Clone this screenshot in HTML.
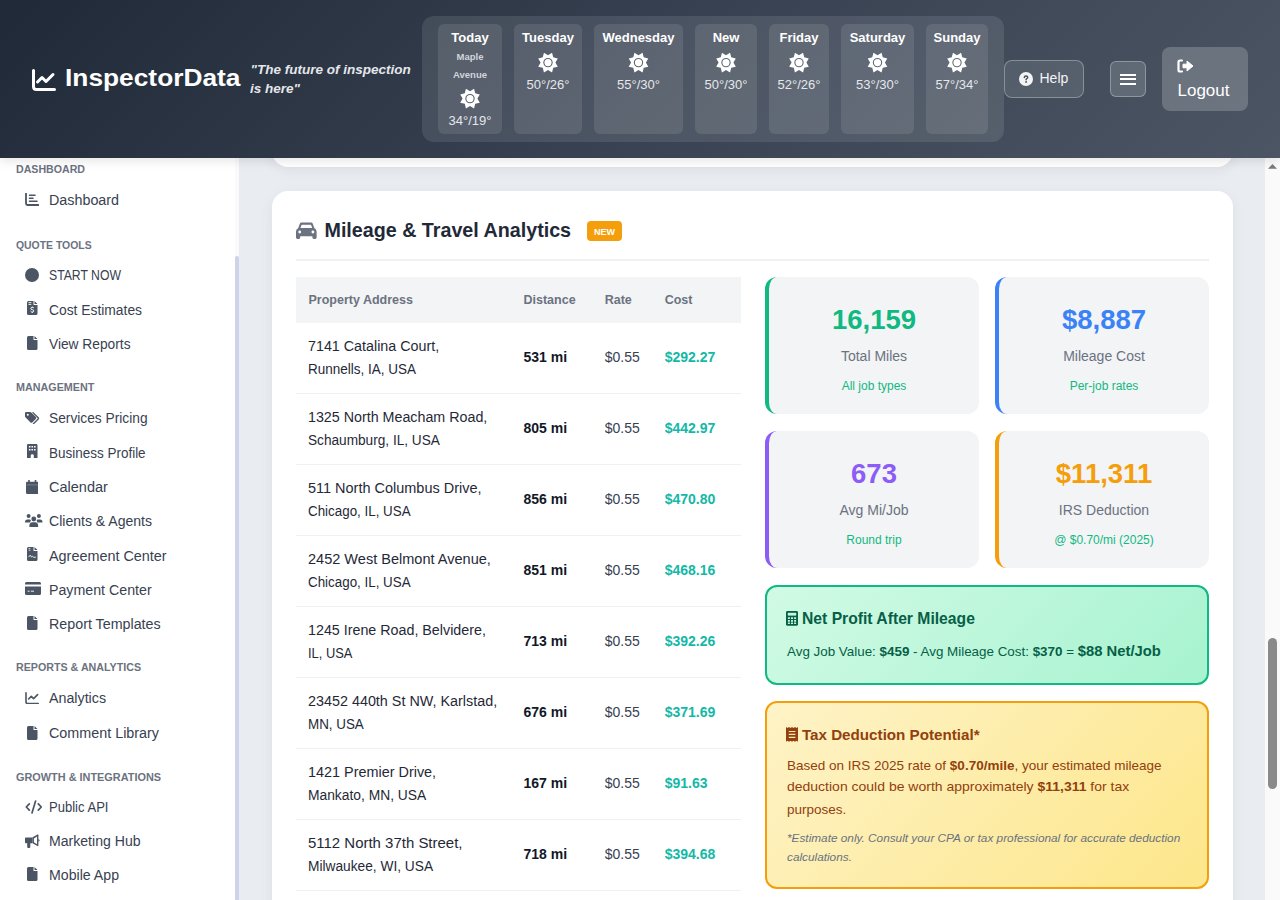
<!DOCTYPE html>
<html><head><meta charset="utf-8">
<style>
*{box-sizing:border-box;margin:0;padding:0}
html,body{width:1280px;height:900px;overflow:hidden;font-family:"Liberation Sans",sans-serif;background:#fff;position:relative}
.a{position:absolute}
.t{position:absolute;line-height:1;white-space:nowrap}
#hdr{left:0;top:0;width:1280px;height:158px;background:linear-gradient(135deg,#1f2937 0%,#374151 50%,#4b5563 100%);box-shadow:0 3px 10px rgba(0,0,0,0.1)}
#side{left:0;top:158px;width:239px;height:742px;background:#fff}
#main{left:239px;top:158px;width:1041px;height:742px;background:#e9ecf0}
</style></head><body>
<div class="a" style="left:0;top:0;z-index:10"><div class="a" id="hdr"></div>
<svg class="a" style="left:31px;top:68.6px" width="26" height="23" viewBox="0 0 26 23"><path d="M2.5 1.5V17.5Q2.5 20.5 5.5 20.5H23.5" fill="none" stroke="#fff" stroke-width="3" stroke-linecap="round" stroke-linejoin="round"/><path d="M6.5 13L11 8.5L15 12.5L22 5.5" fill="none" stroke="#fff" stroke-width="3" stroke-linecap="round" stroke-linejoin="round"/></svg>
<div class="t" style="left:65.00px;top:67.02px;font-size:23.6px;color:#fff;transform:scaleX(1.1154);transform-origin:0 0;font-weight:700;">InspectorData</div>
<div class="t" style="left:250.50px;top:63.27px;font-size:13.5px;color:#e5e7eb;font-weight:700;font-style:italic;">&quot;The future of inspection</div>
<div class="t" style="left:250.00px;top:82.27px;font-size:13.5px;color:#e5e7eb;font-weight:700;font-style:italic;">is here&quot;</div>
<div class="a" style="left:422px;top:16px;width:582px;height:126px;background:rgba(255,255,255,0.1);border-radius:12px"></div>
<div class="a" style="left:438px;top:24px;width:64px;height:110px;background:rgba(255,255,255,0.1);border-radius:6px"></div>
<div class="t" style="left:428.00px;top:30.60px;width:84px;text-align:center;font-size:13px;color:#fff;font-weight:700;">Today</div>
<div class="t" style="left:438.00px;top:52.36px;width:64px;text-align:center;font-size:9.5px;color:#d1d5db;font-weight:700;">Maple</div>
<div class="t" style="left:438.00px;top:69.96px;width:64px;text-align:center;font-size:9.5px;color:#d1d5db;font-weight:700;">Avenue</div>
<div class="t" style="left:428.00px;top:113.80px;width:84px;text-align:center;font-size:13px;color:#e5e7eb;">34°/19°</div>
<div class="a" style="left:514px;top:24px;width:68px;height:110px;background:rgba(255,255,255,0.1);border-radius:6px"></div>
<div class="t" style="left:504.00px;top:30.60px;width:88px;text-align:center;font-size:13px;color:#fff;font-weight:700;">Tuesday</div>
<div class="t" style="left:504.00px;top:78.20px;width:88px;text-align:center;font-size:13px;color:#e5e7eb;">50°/26°</div>
<div class="a" style="left:594px;top:24px;width:89px;height:110px;background:rgba(255,255,255,0.1);border-radius:6px"></div>
<div class="t" style="left:584.00px;top:30.60px;width:109px;text-align:center;font-size:13px;color:#fff;font-weight:700;">Wednesday</div>
<div class="t" style="left:584.00px;top:78.20px;width:109px;text-align:center;font-size:13px;color:#e5e7eb;">55°/30°</div>
<div class="a" style="left:695px;top:24px;width:62px;height:110px;background:rgba(255,255,255,0.1);border-radius:6px"></div>
<div class="t" style="left:685.00px;top:30.60px;width:82px;text-align:center;font-size:13px;color:#fff;font-weight:700;">New</div>
<div class="t" style="left:685.00px;top:78.20px;width:82px;text-align:center;font-size:13px;color:#e5e7eb;">50°/30°</div>
<div class="a" style="left:769px;top:24px;width:60px;height:110px;background:rgba(255,255,255,0.1);border-radius:6px"></div>
<div class="t" style="left:759.00px;top:30.60px;width:80px;text-align:center;font-size:13px;color:#fff;font-weight:700;">Friday</div>
<div class="t" style="left:759.00px;top:78.20px;width:80px;text-align:center;font-size:13px;color:#e5e7eb;">52°/26°</div>
<div class="a" style="left:841px;top:24px;width:73px;height:110px;background:rgba(255,255,255,0.1);border-radius:6px"></div>
<div class="t" style="left:831.00px;top:30.60px;width:93px;text-align:center;font-size:13px;color:#fff;font-weight:700;">Saturday</div>
<div class="t" style="left:831.00px;top:78.20px;width:93px;text-align:center;font-size:13px;color:#e5e7eb;">53°/30°</div>
<div class="a" style="left:926px;top:24px;width:62px;height:110px;background:rgba(255,255,255,0.1);border-radius:6px"></div>
<div class="t" style="left:916.00px;top:30.60px;width:82px;text-align:center;font-size:13px;color:#fff;font-weight:700;">Sunday</div>
<div class="t" style="left:916.00px;top:78.20px;width:82px;text-align:center;font-size:13px;color:#e5e7eb;">57°/34°</div>
<svg class="a" style="left:0;top:0" width="1280" height="158" viewBox="0 0 1280 158"><path fill="#fff" fill-rule="evenodd" d="M474.06 88.81 L475.23 93.37 L479.79 94.54 L477.40 98.60 L479.79 102.66 L475.23 103.83 L474.06 108.39 L470.00 106.00 L465.94 108.39 L464.77 103.83 L460.21 102.66 L462.60 98.60 L460.21 94.54 L464.77 93.37 L465.94 88.81 L470.00 91.20ZM465.30 98.60a4.7 4.7 0 1 0 9.4 0a4.7 4.7 0 1 0 -9.4 0ZM466.40 98.60a3.6 3.6 0 1 0 7.2 0a3.6 3.6 0 1 0 -7.2 0ZM552.06 52.81 L553.23 57.37 L557.79 58.54 L555.40 62.60 L557.79 66.66 L553.23 67.83 L552.06 72.39 L548.00 70.00 L543.94 72.39 L542.77 67.83 L538.21 66.66 L540.60 62.60 L538.21 58.54 L542.77 57.37 L543.94 52.81 L548.00 55.20ZM543.30 62.60a4.7 4.7 0 1 0 9.4 0a4.7 4.7 0 1 0 -9.4 0ZM544.40 62.60a3.6 3.6 0 1 0 7.2 0a3.6 3.6 0 1 0 -7.2 0ZM642.56 52.81 L643.73 57.37 L648.29 58.54 L645.90 62.60 L648.29 66.66 L643.73 67.83 L642.56 72.39 L638.50 70.00 L634.44 72.39 L633.27 67.83 L628.71 66.66 L631.10 62.60 L628.71 58.54 L633.27 57.37 L634.44 52.81 L638.50 55.20ZM633.80 62.60a4.7 4.7 0 1 0 9.4 0a4.7 4.7 0 1 0 -9.4 0ZM634.90 62.60a3.6 3.6 0 1 0 7.2 0a3.6 3.6 0 1 0 -7.2 0ZM730.06 52.81 L731.23 57.37 L735.79 58.54 L733.40 62.60 L735.79 66.66 L731.23 67.83 L730.06 72.39 L726.00 70.00 L721.94 72.39 L720.77 67.83 L716.21 66.66 L718.60 62.60 L716.21 58.54 L720.77 57.37 L721.94 52.81 L726.00 55.20ZM721.30 62.60a4.7 4.7 0 1 0 9.4 0a4.7 4.7 0 1 0 -9.4 0ZM722.40 62.60a3.6 3.6 0 1 0 7.2 0a3.6 3.6 0 1 0 -7.2 0ZM803.06 52.81 L804.23 57.37 L808.79 58.54 L806.40 62.60 L808.79 66.66 L804.23 67.83 L803.06 72.39 L799.00 70.00 L794.94 72.39 L793.77 67.83 L789.21 66.66 L791.60 62.60 L789.21 58.54 L793.77 57.37 L794.94 52.81 L799.00 55.20ZM794.30 62.60a4.7 4.7 0 1 0 9.4 0a4.7 4.7 0 1 0 -9.4 0ZM795.40 62.60a3.6 3.6 0 1 0 7.2 0a3.6 3.6 0 1 0 -7.2 0ZM881.56 52.81 L882.73 57.37 L887.29 58.54 L884.90 62.60 L887.29 66.66 L882.73 67.83 L881.56 72.39 L877.50 70.00 L873.44 72.39 L872.27 67.83 L867.71 66.66 L870.10 62.60 L867.71 58.54 L872.27 57.37 L873.44 52.81 L877.50 55.20ZM872.80 62.60a4.7 4.7 0 1 0 9.4 0a4.7 4.7 0 1 0 -9.4 0ZM873.90 62.60a3.6 3.6 0 1 0 7.2 0a3.6 3.6 0 1 0 -7.2 0ZM961.06 52.81 L962.23 57.37 L966.79 58.54 L964.40 62.60 L966.79 66.66 L962.23 67.83 L961.06 72.39 L957.00 70.00 L952.94 72.39 L951.77 67.83 L947.21 66.66 L949.60 62.60 L947.21 58.54 L951.77 57.37 L952.94 52.81 L957.00 55.20ZM952.30 62.60a4.7 4.7 0 1 0 9.4 0a4.7 4.7 0 1 0 -9.4 0ZM953.40 62.60a3.6 3.6 0 1 0 7.2 0a3.6 3.6 0 1 0 -7.2 0Z"/></svg>
<div class="a" style="left:1004px;top:60px;width:80px;height:38px;border:1px solid rgba(255,255,255,0.3);background:rgba(255,255,255,0.1);border-radius:8px"></div>
<svg class="a" style="left:1019px;top:72px" width="14" height="14" viewBox="0 0 14 14"><circle cx="7" cy="7" r="7" fill="#f3f4f6"/><path d="M5.3 5.6Q5.3 3.9 7 3.9Q8.7 3.9 8.7 5.3Q8.7 6.2 7.7 6.7Q7.1 7 7.1 7.8" fill="none" stroke="#4b5260" stroke-width="1.5" stroke-linecap="round"/><circle cx="7.1" cy="9.9" r="0.95" fill="#4b5260"/></svg>
<div class="t" style="left:1039.50px;top:71.25px;font-size:14px;color:#f3f4f6;">Help</div>
<div class="a" style="left:1110px;top:61px;width:36px;height:36px;border:1px solid rgba(255,255,255,0.3);background:rgba(255,255,255,0.15);border-radius:6px"></div>
<div class="a" style="left:1120px;top:74px;width:16px;height:2px;background:#fff"></div>
<div class="a" style="left:1120px;top:78.25px;width:16px;height:2px;background:#fff"></div>
<div class="a" style="left:1120px;top:82.5px;width:16px;height:2px;background:#fff"></div>
<div class="a" style="left:1162px;top:47px;width:86px;height:64px;background:rgba(255,255,255,0.2);border-radius:8px"></div>
<svg class="a" style="left:1177px;top:59px" width="17" height="14" viewBox="0 0 17 14"><path d="M5 1.5H3Q1.5 1.5 1.5 3V11Q1.5 12.5 3 12.5H5" fill="none" stroke="#fff" stroke-width="2.2" stroke-linecap="round"/><path d="M6 5.2H10V2L16 7L10 12V8.8H6Z" fill="#fff" stroke="#fff" stroke-width="1" stroke-linejoin="round"/></svg>
<div class="t" style="left:1177.50px;top:81.61px;font-size:17px;color:#fff;">Logout</div>
</div>
<div class="a" id="side"></div>
<div class="t" style="left:16.00px;top:164.11px;font-size:10.5px;color:#6b7280;transform:scaleX(1.0115);transform-origin:0 0;font-weight:700;">DASHBOARD</div>
<div class="t" style="left:16.00px;top:240.11px;font-size:10.5px;color:#6b7280;transform:scaleX(0.9919);transform-origin:0 0;font-weight:700;">QUOTE TOOLS</div>
<div class="t" style="left:16.00px;top:382.41px;font-size:10.5px;color:#6b7280;transform:scaleX(1.0250);transform-origin:0 0;font-weight:700;">MANAGEMENT</div>
<div class="t" style="left:16.00px;top:662.31px;font-size:10.5px;color:#6b7280;transform:scaleX(1.0176);transform-origin:0 0;font-weight:700;">REPORTS &amp; ANALYTICS</div>
<div class="t" style="left:16.00px;top:771.61px;font-size:10.5px;color:#6b7280;transform:scaleX(1.0375);transform-origin:0 0;font-weight:700;">GROWTH &amp; INTEGRATIONS</div>
<div class="t" style="left:49.00px;top:193.15px;font-size:14px;color:#374151;transform:scaleX(1.0226);transform-origin:0 0;">Dashboard</div>
<svg class="a" style="left:25px;top:192.5px" width="14" height="13" viewBox="0 0 14 13"><path d="M1 0.5V10.5Q1 12 2.5 12H13.5" fill="none" stroke="#4b5563" stroke-width="1.8" stroke-linecap="round"/><path d="M4.5 2.2H10M4.5 5.2H8M4.5 8.2H12" stroke="#4b5563" stroke-width="1.6" stroke-linecap="round"/></svg>
<div class="t" style="left:49.00px;top:268.15px;font-size:14px;color:#374151;transform:scaleX(0.8731);transform-origin:0 0;">START NOW</div>
<svg class="a" style="left:25px;top:267.5px" width="14" height="14" viewBox="0 0 14 14"><circle cx="7" cy="7" r="7" fill="#4b5563"/></svg>
<div class="t" style="left:49.00px;top:302.95px;font-size:14px;color:#374151;transform:scaleX(0.9880);transform-origin:0 0;">Cost Estimates</div>
<svg class="a" style="left:27px;top:301.3px" width="10.5" height="14" viewBox="0 0 10.5 14"><path d="M1.5 0H6.5V3.5Q6.5 4 7 4H10.5V12.5Q10.5 14 9 14H1.5Q0 14 0 12.5V1.5Q0 0 1.5 0ZM7.5 0L10.5 3H7.5Z" fill="#4b5563"/><path d="M1.5 1.6H4.3M1.5 3.4H4.3" stroke="#fff" stroke-width="0.9"/><path d="M7 7.2Q6.6 6.4 5.3 6.4Q3.8 6.4 3.8 7.6Q3.8 8.5 5.3 8.7Q6.8 8.9 6.8 9.9Q6.8 11 5.3 11Q4 11 3.6 10.2M5.3 5.6V6.4M5.3 11V11.9" fill="none" stroke="#fff" stroke-width="1"/></svg>
<div class="t" style="left:49.00px;top:337.25px;font-size:14px;color:#374151;transform:scaleX(0.9821);transform-origin:0 0;">View Reports</div>
<svg class="a" style="left:27px;top:335.6px" width="10.5" height="14" viewBox="0 0 10.5 14"><path d="M1.5 0H6.5V3.5Q6.5 4 7 4H10.5V12.5Q10.5 14 9 14H1.5Q0 14 0 12.5V1.5Q0 0 1.5 0ZM7.5 0L10.5 3H7.5Z" fill="#4b5563"/></svg>
<div class="t" style="left:49.00px;top:411.45px;font-size:14px;color:#374151;transform:scaleX(0.9816);transform-origin:0 0;">Services Pricing</div>
<svg class="a" style="left:25px;top:411.5px" width="14.5" height="12.5" viewBox="0 0 14.5 12.5"><path d="M0 1.2Q0 0 1.2 0H5.3Q5.9 0 6.3 0.4L10.9 5Q11.8 5.9 10.9 6.8L7.3 10.4Q6.4 11.3 5.5 10.4L0.4 5.3Q0 4.9 0 4.3Z" fill="#4b5563"/><circle cx="2.8" cy="2.8" r="1" fill="#fff"/><path d="M8 0.6L13.2 5.8Q13.8 6.4 13.2 7L8.5 11.7" fill="none" stroke="#4b5563" stroke-width="1.3" stroke-linecap="round"/></svg>
<div class="t" style="left:49.00px;top:445.75px;font-size:14px;color:#374151;transform:scaleX(0.9625);transform-origin:0 0;">Business Profile</div>
<svg class="a" style="left:27px;top:444.1px" width="10.5" height="14" viewBox="0 0 10.5 14"><path d="M1.2 0H9.3Q10.5 0 10.5 1.2V14H6.8V11.5Q6.8 10.2 5.25 10.2Q3.7 10.2 3.7 11.5V14H0V1.2Q0 0 1.2 0Z" fill="#4b5563"/><path d="M1.9 2.1h1.6v1.4h-1.6zM4.45 2.1h1.6v1.4h-1.6zM7 2.1h1.6v1.4h-1.6zM1.9 5.1h1.6v1.4h-1.6zM4.45 5.1h1.6v1.4h-1.6zM7 5.1h1.6v1.4h-1.6z" fill="#fff"/></svg>
<div class="t" style="left:49.00px;top:480.05px;font-size:14px;color:#374151;transform:scaleX(1.0356);transform-origin:0 0;">Calendar</div>
<svg class="a" style="left:25.8px;top:479.7px" width="12.5" height="14" viewBox="0 0 12.5 14"><path d="M3 0.3V2.5M9.5 0.3V2.5" stroke="#4b5563" stroke-width="1.6" stroke-linecap="round"/><path d="M1.3 1.8H11.2Q12.5 1.8 12.5 3.1V12.7Q12.5 14 11.2 14H1.3Q0 14 0 12.7V3.1Q0 1.8 1.3 1.8Z" fill="#4b5563"/><path d="M0.3 4.9H12.2" stroke="#fff" stroke-width="0.5" opacity="0.5"/></svg>
<div class="t" style="left:49.00px;top:514.35px;font-size:14px;color:#374151;transform:scaleX(1.0027);transform-origin:0 0;">Clients &amp; Agents</div>
<svg class="a" style="left:25px;top:513.2px" width="17.5" height="14" viewBox="0 0 17.5 14"><circle cx="3.6" cy="3" r="2" fill="#4b5563"/><circle cx="13.9" cy="3" r="2" fill="#4b5563"/><circle cx="8.75" cy="6" r="2.4" fill="#4b5563"/><path d="M0 9Q0 6.4 2.4 6.4H4.8Q5.6 6.4 6 6.9Q5.2 8 5.3 9.6H0.6Q0 9.6 0 9Z" fill="#4b5563"/><path d="M17.5 9Q17.5 6.4 15.1 6.4H12.7Q11.9 6.4 11.5 6.9Q12.3 8 12.2 9.6H16.9Q17.5 9.6 17.5 9Z" fill="#4b5563"/><path d="M4.3 13.4Q4.3 9.3 7.5 9.3H10Q13.2 9.3 13.2 13.4Q13.2 14 12.6 14H4.9Q4.3 14 4.3 13.4Z" fill="#4b5563"/></svg>
<div class="t" style="left:49.00px;top:548.65px;font-size:14px;color:#374151;transform:scaleX(1.0285);transform-origin:0 0;">Agreement Center</div>
<svg class="a" style="left:27px;top:547.0px" width="10.5" height="14" viewBox="0 0 10.5 14"><path d="M1.5 0H6.5V3.5Q6.5 4 7 4H10.5V12.5Q10.5 14 9 14H1.5Q0 14 0 12.5V1.5Q0 0 1.5 0ZM7.5 0L10.5 3H7.5Z" fill="#4b5563"/><path d="M1.6 1.6H3.4M1.6 3.2H3.4" stroke="#fff" stroke-width="0.8"/><path d="M1.5 10.2L3.2 8.2L4.5 10L5.3 9.3L6.2 10.2H8.8" fill="none" stroke="#fff" stroke-width="0.9"/></svg>
<div class="t" style="left:49.00px;top:582.95px;font-size:14px;color:#374151;transform:scaleX(1.0146);transform-origin:0 0;">Payment Center</div>
<svg class="a" style="left:25px;top:582.0px" width="16" height="13" viewBox="0 0 16 13"><path d="M1.5 0H14.5Q16 0 16 1.5V2.6H0V1.5Q0 0 1.5 0ZM0 4.4H16V11.5Q16 13 14.5 13H1.5Q0 13 0 11.5Z" fill="#4b5563"/><path d="M2.6 9.2H4.6M5.8 9.2H9" stroke="#fff" stroke-width="0.9"/></svg>
<div class="t" style="left:49.00px;top:617.25px;font-size:14px;color:#374151;transform:scaleX(1.0199);transform-origin:0 0;">Report Templates</div>
<svg class="a" style="left:27px;top:615.6px" width="10.5" height="14" viewBox="0 0 10.5 14"><path d="M1.5 0H6.5V3.5Q6.5 4 7 4H10.5V12.5Q10.5 14 9 14H1.5Q0 14 0 12.5V1.5Q0 0 1.5 0ZM7.5 0L10.5 3H7.5Z" fill="#4b5563"/></svg>
<div class="t" style="left:49.00px;top:691.35px;font-size:14px;color:#374151;transform:scaleX(1.0176);transform-origin:0 0;">Analytics</div>
<svg class="a" style="left:25px;top:691.7px" width="14" height="12.5" viewBox="0 0 14 12.5"><path d="M1 0.8V10Q1 11.5 2.5 11.5H13.2" fill="none" stroke="#4b5563" stroke-width="1.6" stroke-linecap="round"/><path d="M3.6 7L6.3 4.4L8.6 6.6L12.6 2.6" fill="none" stroke="#4b5563" stroke-width="1.6" stroke-linecap="round" stroke-linejoin="round"/></svg>
<div class="t" style="left:49.00px;top:725.65px;font-size:14px;color:#374151;transform:scaleX(1.0250);transform-origin:0 0;">Comment Library</div>
<svg class="a" style="left:27px;top:725.5px" width="10.5" height="14" viewBox="0 0 10.5 14"><path d="M1.5 0H6.5V3.5Q6.5 4 7 4H10.5V12.5Q10.5 14 9 14H1.5Q0 14 0 12.5V1.5Q0 0 1.5 0ZM7.5 0L10.5 3H7.5Z" fill="#4b5563"/></svg>
<div class="t" style="left:49.00px;top:799.65px;font-size:14px;color:#374151;transform:scaleX(0.9322);transform-origin:0 0;">Public API</div>
<svg class="a" style="left:24.8px;top:800.0px" width="17.6" height="14" viewBox="0 0 17.6 14"><path d="M4.3 3.8L1.3 7L4.3 10.2M13.3 3.8L16.3 7L13.3 10.2M10.6 1L7 13" fill="none" stroke="#4b5563" stroke-width="1.7" stroke-linecap="round" stroke-linejoin="round"/></svg>
<div class="t" style="left:49.00px;top:833.95px;font-size:14px;color:#374151;transform:scaleX(1.0055);transform-origin:0 0;">Marketing Hub</div>
<svg class="a" style="left:25px;top:834.0px" width="14.5" height="14" viewBox="0 0 14.5 14"><path d="M12.5 0.4Q13.4 0.2 13.4 1.2V11.6Q13.4 12.6 12.5 12.1L7.6 9.3V3.2Z" fill="#4b5563"/><path d="M0.9 3.4H7.6V9.2H5.3V12.9Q5.3 14 4.2 14H3.3Q2.2 14 2.2 12.9V9.2H0.9Q0 9.2 0 8.3V4.3Q0 3.4 0.9 3.4Z" fill="#4b5563"/><path d="M13.4 4.9Q14.5 5.2 14.5 6.3Q14.5 7.4 13.4 7.7Z" fill="#4b5563"/><path d="M8.9 4.5L12 2.4V10.2L8.9 8.2Z" fill="#fff"/></svg>
<div class="t" style="left:49.00px;top:868.25px;font-size:14px;color:#374151;transform:scaleX(1.0108);transform-origin:0 0;">Mobile App</div>
<svg class="a" style="left:27px;top:866.6px" width="10.5" height="14" viewBox="0 0 10.5 14"><path d="M1.5 0H6.5V3.5Q6.5 4 7 4H10.5V12.5Q10.5 14 9 14H1.5Q0 14 0 12.5V1.5Q0 0 1.5 0ZM7.5 0L10.5 3H7.5Z" fill="#4b5563"/></svg>
<div class="a" style="left:235px;top:158px;width:4px;height:742px;background:#fafafa"></div>
<div class="a" style="left:235px;top:256px;width:4px;height:660px;background:#cdd3ea;border-radius:2px"></div>
<div class="a" style="left:239px;top:158px;width:1px;height:742px;background:rgba(205,211,234,0.6)"></div>
<div class="a" id="main"></div>
<div class="a" style="left:272px;top:100px;width:961px;height:67px;background:#fff;border-radius:16px;box-shadow:0 4px 14px rgba(0,0,0,0.06)"></div>
<div class="a" style="left:272px;top:191px;width:961px;height:760px;background:#fff;border-radius:16px;box-shadow:0 4px 14px rgba(0,0,0,0.06)"></div>
<svg class="a" style="left:296px;top:222px" width="20.6" height="17" viewBox="0 0 20.6 17"><path d="M5.6 0.6H15Q16.4 0.6 16.9 1.9L18.3 6.1Q20.6 7.2 20.6 9.6V14.2H0V9.6Q0 7.2 2.3 6.1L3.7 1.9Q4.2 0.6 5.6 0.6ZM5.4 3.3L4.4 6H16.2L15.2 3.3Q15 2.7 14.4 2.7H6.2Q5.6 2.7 5.4 3.3Z" fill="#6b7280" fill-rule="evenodd"/><path d="M0 13.5H4.2V15.6Q4.2 17 2.8 17H1.4Q0 17 0 15.6ZM16.4 13.5H20.6V15.6Q20.6 17 19.2 17H17.8Q16.4 17 16.4 15.6Z" fill="#6b7280"/><circle cx="3.7" cy="10" r="1.4" fill="#fff"/><circle cx="16.9" cy="10" r="1.4" fill="#fff"/></svg>
<div class="t" style="left:324.50px;top:221.32px;font-size:19.7px;color:#1f2937;font-weight:700;">Mileage &amp; Travel Analytics</div>
<div class="a" style="left:587px;top:221px;width:35px;height:20px;background:#f59e0b;border-radius:4px"></div>
<div class="t" style="left:584.50px;top:228.38px;width:40px;text-align:center;font-size:9px;color:#fff;font-weight:700;">NEW</div>
<div class="a" style="left:296px;top:259px;width:913px;height:2px;background:#f0f1f3"></div>
<div class="a" style="left:296px;top:277px;width:445px;height:46px;background:#f3f4f6"></div>
<div class="t" style="left:308.50px;top:294.22px;font-size:12.5px;color:#6b7280;font-weight:700;">Property Address</div>
<div class="t" style="left:523.50px;top:294.22px;font-size:12.5px;color:#6b7280;font-weight:700;">Distance</div>
<div class="t" style="left:604.70px;top:294.22px;font-size:12.5px;color:#6b7280;font-weight:700;">Rate</div>
<div class="t" style="left:664.70px;top:294.22px;font-size:12.5px;color:#6b7280;font-weight:700;">Cost</div>
<div class="t" style="left:308.00px;top:338.50px;font-size:14px;color:#1f2937;transform:scaleX(1.0212);transform-origin:0 0;">7141 Catalina Court,</div>
<div class="t" style="left:308.00px;top:362.00px;font-size:14px;color:#1f2937;transform:scaleX(0.9627);transform-origin:0 0;">Runnells, IA, USA</div>
<div class="t" style="left:523.50px;top:350.10px;font-size:14px;color:#111827;font-weight:700;">531 mi</div>
<div class="t" style="left:604.70px;top:350.10px;font-size:14px;color:#374151;">$0.55</div>
<div class="t" style="left:664.70px;top:350.10px;font-size:14px;color:#14b8a6;font-weight:700;">$292.27</div>
<div class="a" style="left:296px;top:393px;width:445px;height:1px;background:#f0f1f3"></div>
<div class="t" style="left:308.00px;top:409.50px;font-size:14px;color:#1f2937;transform:scaleX(1.0194);transform-origin:0 0;">1325 North Meacham Road,</div>
<div class="t" style="left:308.00px;top:433.00px;font-size:14px;color:#1f2937;transform:scaleX(0.9742);transform-origin:0 0;">Schaumburg, IL, USA</div>
<div class="t" style="left:523.50px;top:421.10px;font-size:14px;color:#111827;font-weight:700;">805 mi</div>
<div class="t" style="left:604.70px;top:421.10px;font-size:14px;color:#374151;">$0.55</div>
<div class="t" style="left:664.70px;top:421.10px;font-size:14px;color:#14b8a6;font-weight:700;">$442.97</div>
<div class="a" style="left:296px;top:464px;width:445px;height:1px;background:#f0f1f3"></div>
<div class="t" style="left:308.00px;top:480.50px;font-size:14px;color:#1f2937;transform:scaleX(1.0340);transform-origin:0 0;">511 North Columbus Drive,</div>
<div class="t" style="left:308.00px;top:504.00px;font-size:14px;color:#1f2937;transform:scaleX(0.9553);transform-origin:0 0;">Chicago, IL, USA</div>
<div class="t" style="left:523.50px;top:492.10px;font-size:14px;color:#111827;font-weight:700;">856 mi</div>
<div class="t" style="left:604.70px;top:492.10px;font-size:14px;color:#374151;">$0.55</div>
<div class="t" style="left:664.70px;top:492.10px;font-size:14px;color:#14b8a6;font-weight:700;">$470.80</div>
<div class="a" style="left:296px;top:535px;width:445px;height:1px;background:#f0f1f3"></div>
<div class="t" style="left:308.00px;top:551.50px;font-size:14px;color:#1f2937;transform:scaleX(1.0382);transform-origin:0 0;">2452 West Belmont Avenue,</div>
<div class="t" style="left:308.00px;top:575.00px;font-size:14px;color:#1f2937;transform:scaleX(0.9553);transform-origin:0 0;">Chicago, IL, USA</div>
<div class="t" style="left:523.50px;top:563.10px;font-size:14px;color:#111827;font-weight:700;">851 mi</div>
<div class="t" style="left:604.70px;top:563.10px;font-size:14px;color:#374151;">$0.55</div>
<div class="t" style="left:664.70px;top:563.10px;font-size:14px;color:#14b8a6;font-weight:700;">$468.16</div>
<div class="a" style="left:296px;top:606px;width:445px;height:1px;background:#f0f1f3"></div>
<div class="t" style="left:308.00px;top:622.50px;font-size:14px;color:#1f2937;transform:scaleX(1.0202);transform-origin:0 0;">1245 Irene Road, Belvidere,</div>
<div class="t" style="left:308.00px;top:646.00px;font-size:14px;color:#1f2937;transform:scaleX(0.9196);transform-origin:0 0;">IL, USA</div>
<div class="t" style="left:523.50px;top:634.10px;font-size:14px;color:#111827;font-weight:700;">713 mi</div>
<div class="t" style="left:604.70px;top:634.10px;font-size:14px;color:#374151;">$0.55</div>
<div class="t" style="left:664.70px;top:634.10px;font-size:14px;color:#14b8a6;font-weight:700;">$392.26</div>
<div class="a" style="left:296px;top:677px;width:445px;height:1px;background:#f0f1f3"></div>
<div class="t" style="left:308.00px;top:693.50px;font-size:14px;color:#1f2937;transform:scaleX(1.0256);transform-origin:0 0;">23452 440th St NW, Karlstad,</div>
<div class="t" style="left:308.00px;top:717.00px;font-size:14px;color:#1f2937;transform:scaleX(0.9556);transform-origin:0 0;">MN, USA</div>
<div class="t" style="left:523.50px;top:705.10px;font-size:14px;color:#111827;font-weight:700;">676 mi</div>
<div class="t" style="left:604.70px;top:705.10px;font-size:14px;color:#374151;">$0.55</div>
<div class="t" style="left:664.70px;top:705.10px;font-size:14px;color:#14b8a6;font-weight:700;">$371.69</div>
<div class="a" style="left:296px;top:748px;width:445px;height:1px;background:#f0f1f3"></div>
<div class="t" style="left:308.00px;top:764.50px;font-size:14px;color:#1f2937;transform:scaleX(1.0291);transform-origin:0 0;">1421 Premier Drive,</div>
<div class="t" style="left:308.00px;top:788.00px;font-size:14px;color:#1f2937;transform:scaleX(0.9867);transform-origin:0 0;">Mankato, MN, USA</div>
<div class="t" style="left:523.50px;top:776.10px;font-size:14px;color:#111827;font-weight:700;">167 mi</div>
<div class="t" style="left:604.70px;top:776.10px;font-size:14px;color:#374151;">$0.55</div>
<div class="t" style="left:664.70px;top:776.10px;font-size:14px;color:#14b8a6;font-weight:700;">$91.63</div>
<div class="a" style="left:296px;top:819px;width:445px;height:1px;background:#f0f1f3"></div>
<div class="t" style="left:308.00px;top:835.50px;font-size:14px;color:#1f2937;transform:scaleX(1.0690);transform-origin:0 0;">5112 North 37th Street,</div>
<div class="t" style="left:308.00px;top:859.00px;font-size:14px;color:#1f2937;transform:scaleX(0.9805);transform-origin:0 0;">Milwaukee, WI, USA</div>
<div class="t" style="left:523.50px;top:847.10px;font-size:14px;color:#111827;font-weight:700;">718 mi</div>
<div class="t" style="left:604.70px;top:847.10px;font-size:14px;color:#374151;">$0.55</div>
<div class="t" style="left:664.70px;top:847.10px;font-size:14px;color:#14b8a6;font-weight:700;">$394.68</div>
<div class="a" style="left:296px;top:890px;width:445px;height:1px;background:#f0f1f3"></div>
<div class="a" style="left:765px;top:277px;width:214px;height:137px;background:#f3f4f6;border-radius:12px;border-left:4px solid #10b981"></div>
<div class="t" style="left:674.00px;top:305.72px;width:400px;text-align:center;font-size:27.5px;color:#10b981;font-weight:700;">16,159</div>
<div class="t" style="left:674.00px;top:349.05px;width:400px;text-align:center;font-size:14px;color:#6b7280;">Total Miles</div>
<div class="t" style="left:674.00px;top:379.54px;width:400px;text-align:center;font-size:12px;color:#10b981;">All job types</div>
<div class="a" style="left:995px;top:277px;width:214px;height:137px;background:#f3f4f6;border-radius:12px;border-left:4px solid #3b82f6"></div>
<div class="t" style="left:904.00px;top:305.72px;width:400px;text-align:center;font-size:27.5px;color:#3b82f6;font-weight:700;">$8,887</div>
<div class="t" style="left:904.00px;top:349.05px;width:400px;text-align:center;font-size:14px;color:#6b7280;">Mileage Cost</div>
<div class="t" style="left:904.00px;top:379.54px;width:400px;text-align:center;font-size:12px;color:#10b981;">Per-job rates</div>
<div class="a" style="left:765px;top:431px;width:214px;height:137px;background:#f3f4f6;border-radius:12px;border-left:4px solid #8b5cf6"></div>
<div class="t" style="left:674.00px;top:459.72px;width:400px;text-align:center;font-size:27.5px;color:#8b5cf6;font-weight:700;">673</div>
<div class="t" style="left:674.00px;top:503.05px;width:400px;text-align:center;font-size:14px;color:#6b7280;">Avg Mi/Job</div>
<div class="t" style="left:674.00px;top:533.54px;width:400px;text-align:center;font-size:12px;color:#10b981;">Round trip</div>
<div class="a" style="left:995px;top:431px;width:214px;height:137px;background:#f3f4f6;border-radius:12px;border-left:4px solid #f59e0b"></div>
<div class="t" style="left:904.00px;top:459.72px;width:400px;text-align:center;font-size:27.5px;color:#f59e0b;font-weight:700;">$11,311</div>
<div class="t" style="left:904.00px;top:503.05px;width:400px;text-align:center;font-size:14px;color:#6b7280;">IRS Deduction</div>
<div class="t" style="left:904.00px;top:533.54px;width:400px;text-align:center;font-size:12px;color:#10b981;">@ $0.70/mi (2025)</div>
<div class="a" style="left:765px;top:585px;width:444px;height:100px;border:2px solid #10b981;border-radius:12px;background:linear-gradient(135deg,#d1fae5,#a7f3d0)"></div>
<svg class="a" style="left:786px;top:611px" width="12" height="14.7" viewBox="0 0 12 14.7"><path d="M1.4 0H10.6Q12 0 12 1.4V13.3Q12 14.7 10.6 14.7H1.4Q0 14.7 0 13.3V1.4Q0 0 1.4 0Z" fill="#065f46"/><path d="M1.8 1.8H10.2V4.6H1.8Z" fill="#c7f5df"/><path d="M1.9 6.3h2v1.7h-2zM5 6.3h2v1.7h-2zM8.1 6.3h2v1.7h-2zM1.9 9h2v1.7h-2zM5 9h2v1.7h-2zM8.1 9h2v1.7h-2zM1.9 11.6h2v1.5h-2zM5 11.6h2v1.5h-2zM8.1 11.6h2v1.5h-2z" fill="#c7f5df"/></svg>
<div class="t" style="left:802.00px;top:610.71px;font-size:15.7px;color:#065f46;font-weight:700;">Net Profit After Mileage</div>
<div class="t" style="left:787.00px;top:644.46px;font-size:13.4px;color:#065f46;">Avg Job Value: <b>$459</b> - Avg Mileage Cost: <b>$370</b> = <b style="font-size:14.8px">$88 Net/Job</b></div>
<div class="a" style="left:765px;top:701px;width:444px;height:188px;border:2px solid #f59e0b;border-radius:12px;background:linear-gradient(135deg,#fef3c7,#fde68a)"></div>
<svg class="a" style="left:786px;top:727px" width="12" height="14.7" viewBox="0 0 12 14.7"><path d="M0 0L1.5 1L3 0L4.5 1L6 0L7.5 1L9 0L10.5 1L12 0V14.7L10.5 13.7L9 14.7L7.5 13.7L6 14.7L4.5 13.7L3 14.7L1.5 13.7L0 14.7Z" fill="#92400e"/><path d="M2.8 4.5H9.4M2.8 7.4H9.4M2.8 10.3H9.4" stroke="#fde9b0" stroke-width="1.2"/></svg>
<div class="t" style="left:801.90px;top:726.53px;font-size:15.2px;color:#92400e;font-weight:700;">Tax Deduction Potential*</div>
<div class="t" style="left:787.00px;top:758.67px;font-size:13.5px;color:#92400e;">Based on IRS 2025 rate of <b>$0.70/mile</b>, your estimated mileage</div>
<div class="t" style="left:787.00px;top:780.47px;font-size:13.5px;color:#92400e;transform:scaleX(1.0363);transform-origin:0 0;">deduction could be worth approximately <b>$11,311</b> for tax</div>
<div class="t" style="left:787.00px;top:802.57px;font-size:13.5px;color:#92400e;">purposes.</div>
<div class="t" style="left:787.00px;top:833.21px;font-size:11.8px;color:#6b7280;font-style:italic;">*Estimate only. Consult your CPA or tax professional for accurate deduction</div>
<div class="t" style="left:787.00px;top:851.61px;font-size:11.8px;color:#6b7280;font-style:italic;">calculations.</div>
<div class="a" style="left:1265px;top:158px;width:15px;height:742px;background:#fafafa"></div>
<svg class="a" style="left:1267px;top:162px" width="11" height="8" viewBox="0 0 11 8"><path d="M1 6.8L5.5 2L10 6.8Z" fill="#7a7a7a"/></svg>
<div class="a" style="left:1268px;top:638px;width:9px;height:151px;background:#8a8a8a;border-radius:5px"></div>
</body></html>
